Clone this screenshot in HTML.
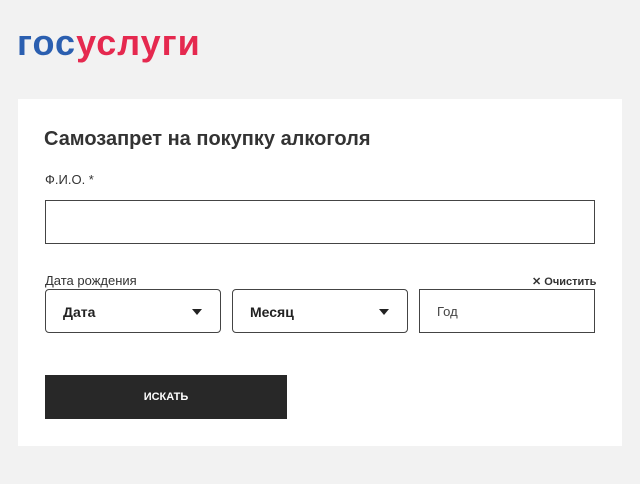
<!DOCTYPE html>
<html><head><meta charset="utf-8"><style>
*{box-sizing:border-box;margin:0;padding:0}
body{width:640px;height:484px;background:#f2f2f2;font-family:"Liberation Sans",sans-serif;position:relative;overflow:hidden;color:#222}
.logo{position:absolute;left:17px;top:22px;font-size:36px;font-weight:bold;letter-spacing:1px}
.logo .b{color:#2b5fb0}.logo .r{color:#e5294f}
.card{position:absolute;left:18px;top:99px;width:604px;height:347px;background:#fff}
.abs{position:absolute}
h1{position:absolute;left:44px;top:128px;font-size:20px;font-weight:bold;color:#333}
.lbl{font-size:13px;color:#333}
.box{position:absolute;border:1px solid #444;background:#fff}
.sel{border-radius:4px;font-size:14px;font-weight:bold;padding:14px 17px;color:#222}
.tri{position:absolute;right:18px;top:19px;width:0;height:0;border-left:5px solid transparent;border-right:5px solid transparent;border-top:6px solid #222}
.btn{position:absolute;left:45px;top:375px;width:242px;height:44px;background:#282828;color:#fff;font-size:11px;font-weight:bold;text-align:center;line-height:44px}
</style></head><body>
<div class="logo"><span class="b">гос</span><span class="r">услуги</span></div>
<div class="card"></div>
<h1>Самозапрет на покупку алкоголя</h1>
<div class="abs lbl" style="left:45px;top:172px">Ф.И.О. *</div>
<div class="box" style="left:45px;top:200px;width:550px;height:44px"></div>
<div class="abs lbl" style="left:45px;top:273px">Дата рождения</div>
<div class="abs" style="left:532px;top:275px;font-size:11px;font-weight:bold;color:#333">✕ Очистить</div>
<div class="box sel" style="left:45px;top:289px;width:176px;height:44px">Дата<div class="tri"></div></div>
<div class="box sel" style="left:232px;top:289px;width:176px;height:44px">Месяц<div class="tri"></div></div>
<div class="box" style="left:419px;top:289px;width:176px;height:44px;font-size:13px;color:#444;padding:14px 17px">Год</div>
<div class="btn">ИСКАТЬ</div>
</body></html>
